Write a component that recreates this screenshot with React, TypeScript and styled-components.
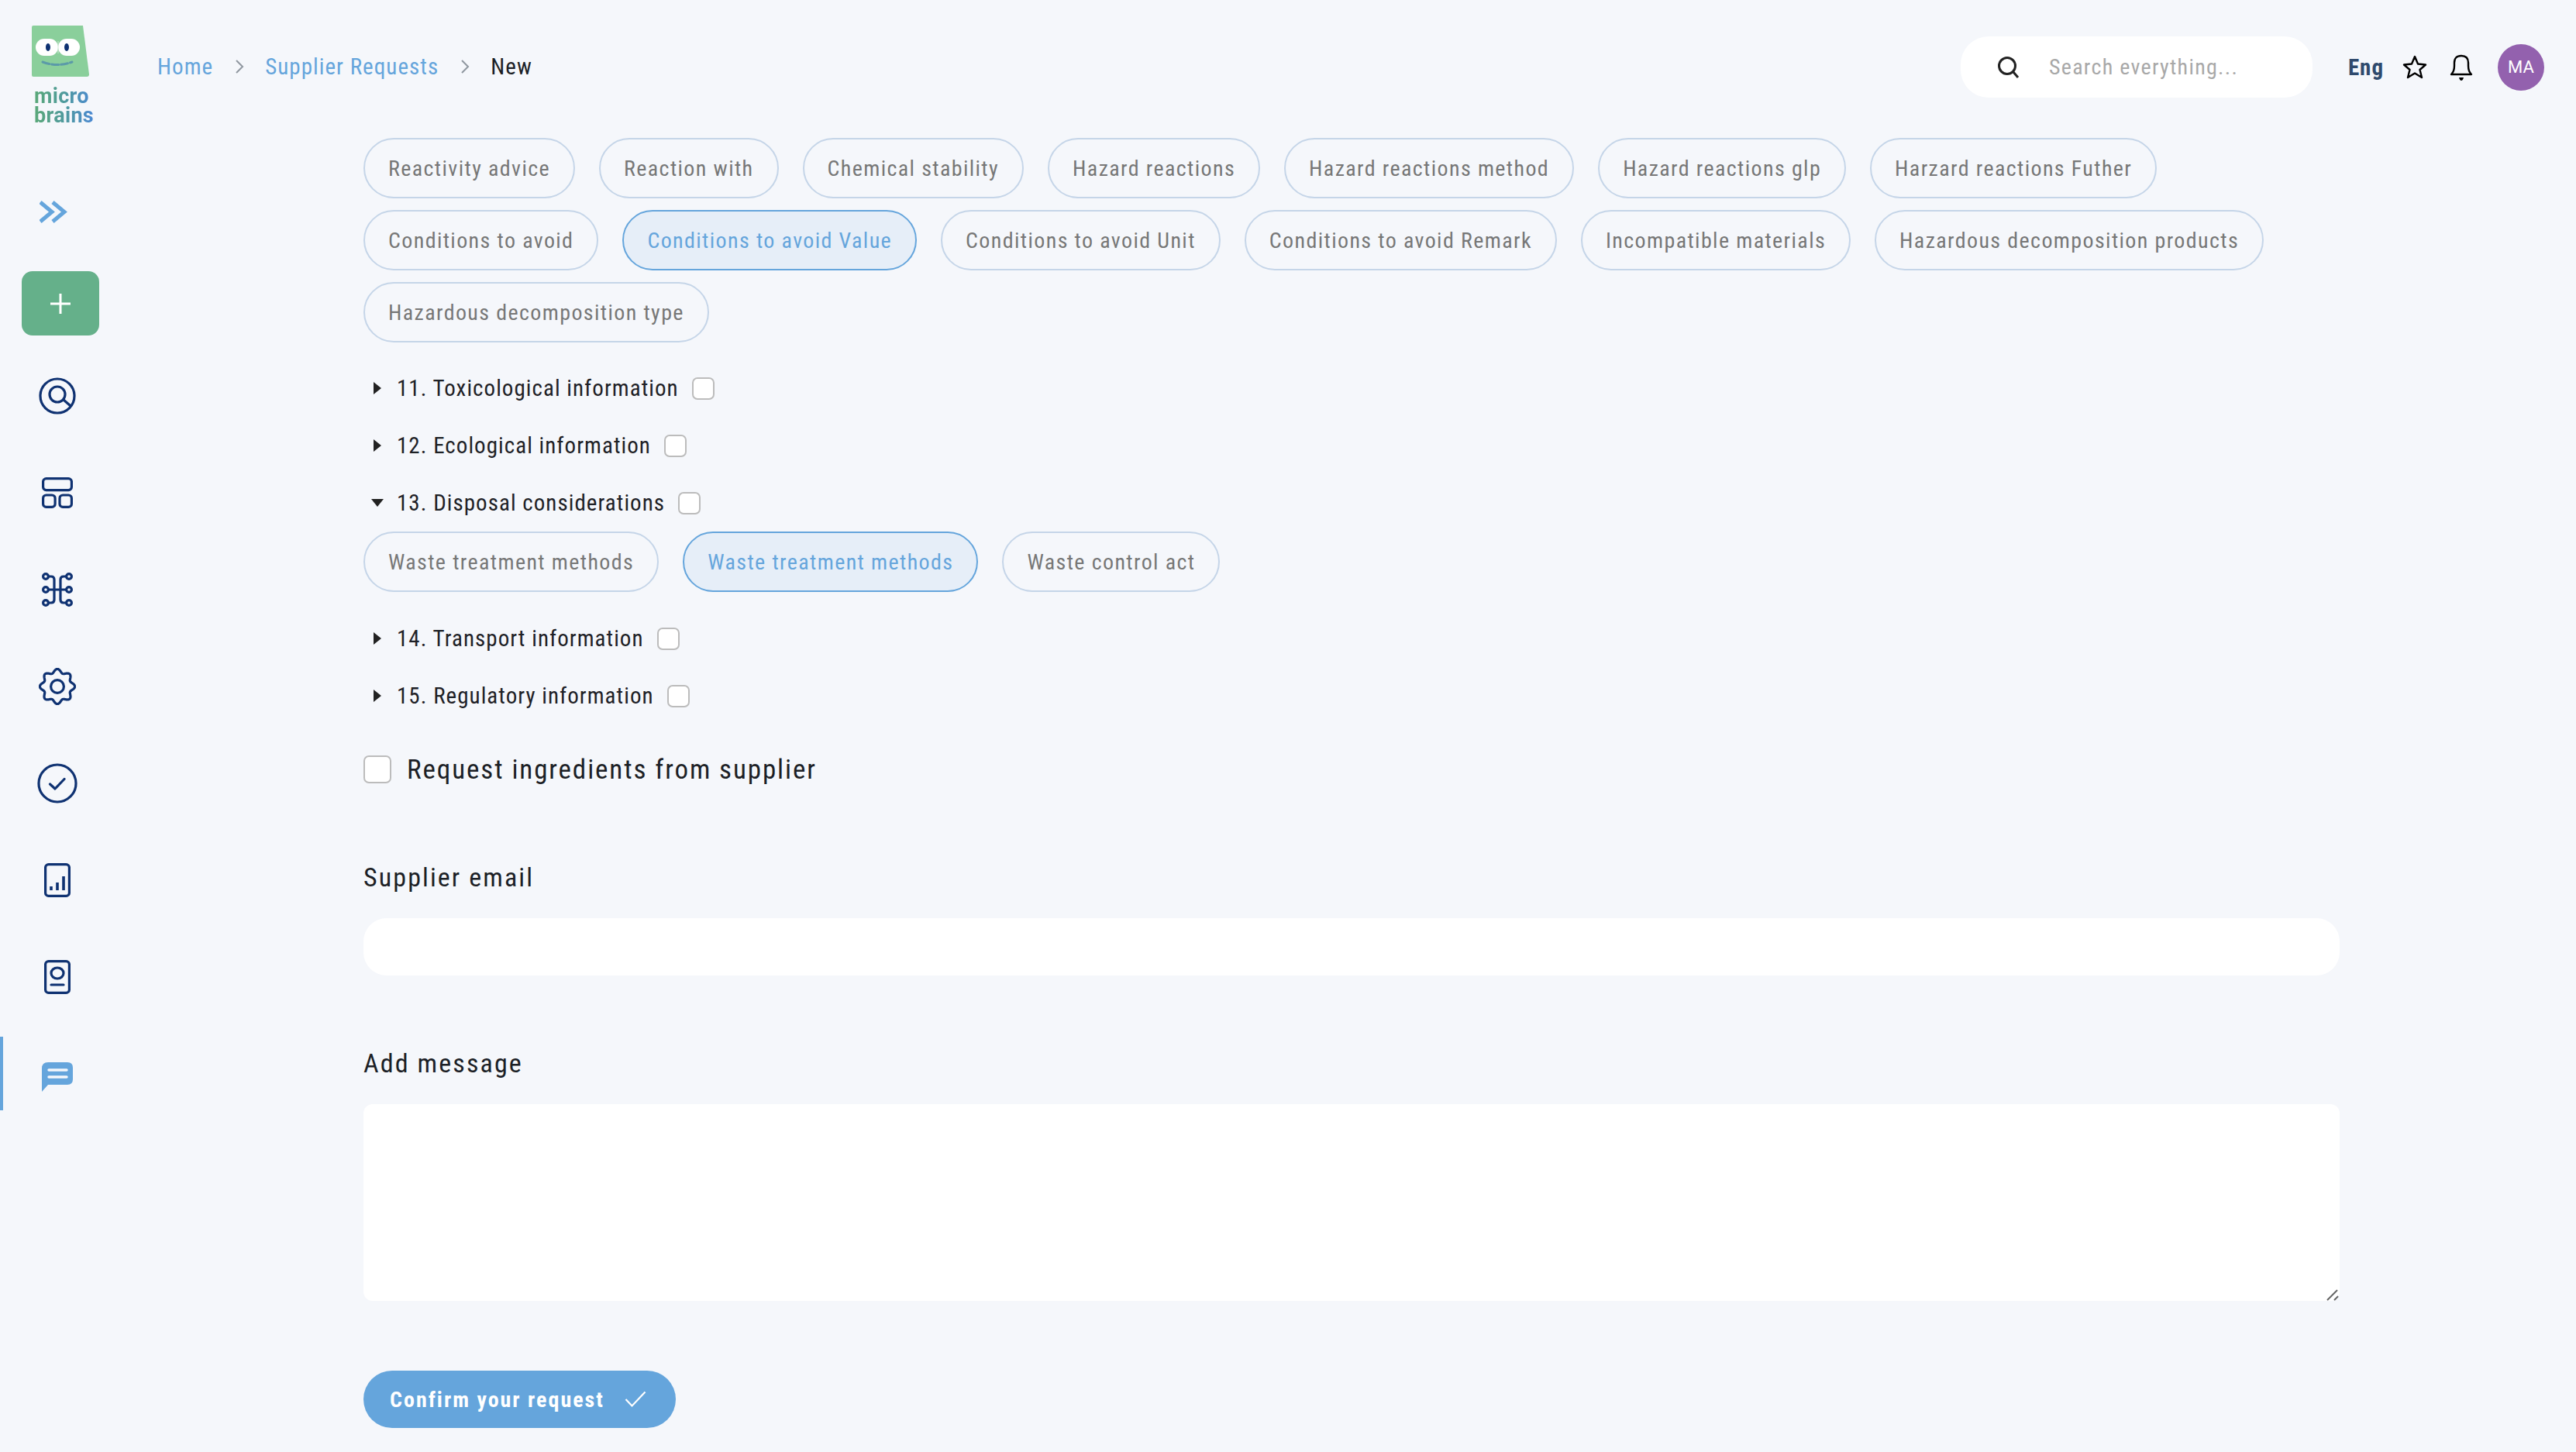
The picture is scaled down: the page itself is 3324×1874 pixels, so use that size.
import React from "react";
import styled, { createGlobalStyle } from "styled-components";

const FONT = `"Roboto Condensed", "Roboto", sans-serif`;
const NAVY = "#0f3272";
const BLUE = "#65a5dc";

const Global = createGlobalStyle`
  html, body { margin: 0; padding: 0; background: #f5f7fb; }
  body { font-family: ${FONT}; overflow: hidden; }
  * { box-sizing: border-box; }
`;

const Page = styled.div`
  display: flex;
  width: 3324px;
  height: 1874px;
  overflow: hidden;
  background: #f5f7fb;
`;

const Sidebar = styled.aside`
  flex: 0 0 148px;
  display: flex;
  flex-direction: column;
  padding-top: 33px;
`;

const LogoBlock = styled.div`
  display: flex;
  flex-direction: column;
  margin-left: 41px;
`;

const LogoText = styled.div`
  margin: 13px 0 0 3px;
  width: 80px;
  font-family: "Roboto", sans-serif;
  font-size: 27px;
  line-height: 25px;
  font-weight: 700;
  letter-spacing: 0.3px;
  background: linear-gradient(90deg, #5aa878 0%, #4f9a9e 50%, #4a86d8 100%);
  -webkit-background-clip: text;
  background-clip: text;
  color: transparent;
`;

const Collapse = styled.div`
  display: flex;
  margin: 96px 0 0 51px;
`;

const AddButton = styled.div`
  width: 100px;
  height: 83px;
  margin: 61px 0 15px 28px;
  border-radius: 14px;
  background: #65b08a;
  display: flex;
  align-items: center;
  justify-content: center;
`;

const NavItem = styled.div<{ $active?: boolean }>`
  position: relative;
  height: 125px;
  display: flex;
  align-items: center;
  justify-content: center;
  ${(p) =>
    p.$active &&
    `
    padding-top: 8px;
    &::before {
      content: "";
      position: absolute;
      left: 0;
      top: 15px;
      width: 4px;
      height: 95px;
      background: ${BLUE};
    }
  `}
`;

const Main = styled.main`
  flex: 1;
  min-width: 0;
  display: flex;
  flex-direction: column;
`;

const Header = styled.header`
  display: flex;
  align-items: center;
  justify-content: space-between;
  padding: 47px 41px 0 55px;
`;

const Breadcrumbs = styled.nav`
  display: flex;
  align-items: center;
  padding-bottom: 2px;
  font-size: 29px;
  letter-spacing: 1.05px;
`;

const Crumb = styled.span<{ $current?: boolean }>`
  color: ${(p) => (p.$current ? "#1c1f26" : BLUE)};
`;

const CrumbSep = styled.span`
  display: flex;
  width: 67px;
  justify-content: center;
`;

const HeaderRight = styled.div`
  display: flex;
  align-items: center;
`;

const SearchBox = styled.label`
  width: 454px;
  height: 79px;
  border-radius: 36px;
  background: #fff;
  display: flex;
  align-items: center;
  padding-left: 47px;
  gap: 37px;
`;

const SearchInput = styled.input`
  border: 0;
  outline: 0;
  padding: 0;
  background: transparent;
  width: 300px;
  font-family: ${FONT};
  font-size: 28px;
  letter-spacing: 1.3px;
  color: #333;
  &::placeholder {
    color: #a8a8a8;
    opacity: 1;
  }
`;

const Lang = styled.span`
  margin-left: 46px;
  font-size: 29px;
  font-weight: 700;
  letter-spacing: 1px;
  color: #2f4a6d;
`;

const HeaderIcon = styled.span<{ $ml: number }>`
  display: flex;
  margin-left: ${(p) => p.$ml}px;
`;

const Avatar = styled.div`
  width: 60px;
  height: 60px;
  margin-left: 32px;
  border-radius: 50%;
  background: #9361ae;
  color: #fff;
  font-family: "Roboto", sans-serif;
  font-size: 22px;
  display: flex;
  align-items: center;
  justify-content: center;
`;

const Content = styled.div`
  margin: 52px 305px 0 321px;
  display: flex;
  flex-direction: column;
`;

const ChipRow = styled.div`
  display: flex;
  flex-wrap: wrap;
  gap: 15px 31px;
`;

const Chip = styled.div<{ $active?: boolean }>`
  height: 78px;
  padding: 0 30px;
  border-radius: 39px;
  border: 2px solid ${(p) => (p.$active ? BLUE : "#c5d5e8")};
  background: ${(p) => (p.$active ? "#e6eef8" : "transparent")};
  color: ${(p) => (p.$active ? BLUE : "#777")};
  font-size: 28px;
  letter-spacing: 1.38px;
  display: flex;
  align-items: center;
  white-space: nowrap;
`;

const Sections = styled.div`
  margin-top: 37px;
  display: flex;
  flex-direction: column;
  gap: 30px;
`;

const SectionRow = styled.div`
  height: 44px;
  display: flex;
  align-items: center;
  color: #1e2126;
  font-size: 29px;
  letter-spacing: 1.05px;
`;

const CaretSlot = styled.span`
  flex: 0 0 43px;
  display: flex;
  justify-content: flex-end;
  padding-right: 20px;
`;

const CaretRight = styled.span`
  width: 0;
  height: 0;
  border-left: 10px solid #222;
  border-top: 8px solid transparent;
  border-bottom: 8px solid transparent;
`;

const CaretDown = styled.span`
  width: 0;
  height: 0;
  margin-right: -3px;
  border-top: 10px solid #222;
  border-left: 8px solid transparent;
  border-right: 8px solid transparent;
`;

const Check = styled.input.attrs({ type: "checkbox" })<{ $size: number }>`
  appearance: none;
  margin: 0;
  width: ${(p) => p.$size}px;
  height: ${(p) => p.$size}px;
  border: 2px solid #bcbcbc;
  border-radius: 7px;
  background: #fff;
  flex: none;
`;

const SectionCheck = styled(Check)`
  margin-left: 17px;
`;

const SubChips = styled(ChipRow)`
  margin: -15px 0 8px;
`;

const RequestRow = styled.label`
  margin-top: 51px;
  height: 44px;
  display: flex;
  align-items: center;
  gap: 20px;
  color: #1c1f26;
  font-size: 35px;
  letter-spacing: 1.9px;
`;

const FieldLabel = styled.div<{ $mt: number }>`
  margin-top: ${(p) => p.$mt}px;
  height: 40px;
  display: flex;
  align-items: center;
  color: #1c1f26;
  font-size: 34px;
  letter-spacing: 2.1px;
`;

const TextInput = styled.input`
  margin-top: 33px;
  width: 100%;
  height: 74px;
  border: 0;
  outline: 0;
  border-radius: 30px;
  background: #fff;
`;

const MessageWrap = styled.div`
  position: relative;
  margin-top: 33px;
`;

const MessageBox = styled.textarea`
  display: block;
  width: 100%;
  height: 254px;
  border: 0;
  outline: 0;
  border-radius: 12px;
  background: #fff;
  resize: none;
`;

const Grip = styled.svg`
  position: absolute;
  right: 1px;
  bottom: 0;
  pointer-events: none;
`;

const Confirm = styled.button`
  margin-top: 90px;
  align-self: flex-start;
  width: 403px;
  height: 74px;
  border: 0;
  border-radius: 37px;
  background: ${BLUE};
  color: #fff;
  font-family: ${FONT};
  font-weight: 700;
  font-size: 28px;
  letter-spacing: 2px;
  display: flex;
  align-items: center;
  padding: 0 0 0 34px;
  gap: 26px;
`;

const gearPath = (() => {
  const pts: string[] = [];
  const n = 160;
  for (let i = 0; i < n; i++) {
    const t = (i / n) * Math.PI * 2;
    const r = 20.2 + 2.4 * Math.cos(8 * t);
    pts.push(`${(24 + r * Math.cos(t)).toFixed(2)} ${(24 + r * Math.sin(t)).toFixed(2)}`);
  }
  return `M${pts.join("L")}Z`;
})();

const iconProps = { fill: "none", stroke: NAVY, strokeWidth: 3.2, strokeLinecap: "round" as const, strokeLinejoin: "round" as const };

const Logo = () => (
  <svg width="76" height="66" viewBox="0 0 76 66">
    <path d="M2 0H66L74 63Q74 66 71 66H2Q0 66 0 64V2Q0 0 2 0Z" fill="#8acf9b" />
    <rect x="5" y="17" width="29" height="22" rx="11" fill="#fff" />
    <rect x="34" y="17" width="28" height="22" rx="11" fill="#fff" />
    <path d="M34 20V36" stroke="#cfe8d6" strokeWidth="1" />
    <ellipse cx="21" cy="28" rx="3" ry="5" fill={NAVY} />
    <ellipse cx="45" cy="28" rx="3" ry="5" fill={NAVY} />
    <path d="M14 47Q33 54 52 47" fill="none" stroke="#5b9aa8" strokeWidth="3" strokeDasharray="9 3" strokeLinecap="round" />
  </svg>
);

const Chevrons = () => (
  <svg width="36" height="31" viewBox="0 0 36 31">
    <path d="M1 3L16 15.5L1 28" fill="none" stroke={BLUE} strokeWidth="5" />
    <path d="M17 3L32 15.5L17 28" fill="none" stroke={BLUE} strokeWidth="5" />
  </svg>
);

const Plus = () => (
  <svg width="28" height="28" viewBox="0 0 28 28">
    <path d="M14 1V27M1 14H27" stroke="#fff" strokeWidth="3" />
  </svg>
);

const SearchRound = () => (
  <svg width="48" height="48" viewBox="0 0 48 48" {...iconProps}>
    <circle cx="24" cy="24" r="22" />
    <circle cx="24" cy="22" r="10" />
    <path d="M32 29L40 36" />
  </svg>
);

const Layout = () => (
  <svg width="40" height="40" viewBox="0 0 40 40" {...iconProps}>
    <rect x="1.6" y="1.6" width="36.8" height="15" rx="4" />
    <rect x="1.6" y="23" width="15.5" height="15.4" rx="4" />
    <rect x="23" y="23" width="15.4" height="15.4" rx="4" />
  </svg>
);

const Cmd = () => (
  <svg width="40" height="44" viewBox="0 0 40 44" {...iconProps}>
    <circle cx="5" cy="5" r="3.4" />
    <circle cx="5" cy="22" r="3.4" />
    <circle cx="5" cy="39" r="3.4" />
    <circle cx="35" cy="5" r="3.4" />
    <circle cx="35" cy="22" r="3.4" />
    <circle cx="35" cy="39" r="3.4" />
    <path d="M8.5 5H12Q16 5 16 9V35Q16 39 12 39H8.5M8.5 22H31.5M31.5 5H28Q24 5 24 9V35Q24 39 28 39H31.5" />
  </svg>
);

const Gear = () => (
  <svg width="48" height="48" viewBox="0 0 48 48" {...iconProps}>
    <path d={gearPath} />
    <circle cx="24" cy="24" r="8.4" />
  </svg>
);

const CheckCircle = () => (
  <svg width="52" height="52" viewBox="0 0 52 52" {...iconProps}>
    <circle cx="26" cy="26" r="24" />
    <path d="M16.5 27L23 33L35 20.5" />
  </svg>
);

const Chart = () => (
  <svg width="34" height="44" viewBox="0 0 34 44" {...iconProps}>
    <rect x="1.6" y="1.6" width="30.8" height="40.8" rx="4" />
    <path d="M9 35V30M17 35V25M25 35V17" strokeWidth="3.6" strokeLinecap="butt" />
  </svg>
);

const Person = () => (
  <svg width="34" height="44" viewBox="0 0 34 44" {...iconProps}>
    <rect x="1.6" y="1.6" width="30.8" height="40.8" rx="4" />
    <ellipse cx="17" cy="17" rx="8" ry="7" />
    <path d="M9 32H25" />
  </svg>
);

const Chat = () => (
  <svg width="40" height="38" viewBox="0 0 40 38">
    <path d="M8 0H33Q40 0 40 7V22Q40 29 33 29H8L0 38V8Q0 0 8 0Z" fill={BLUE} />
    <path d="M9 10H32M9 19H32" stroke="#f5f7fb" strokeWidth="3.4" strokeLinecap="round" />
  </svg>
);

const CrumbChevron = () => (
  <svg width="12" height="20" viewBox="0 0 12 20">
    <path d="M2 2L10 10L2 18" fill="none" stroke="#8f979f" strokeWidth="2" />
  </svg>
);

const SearchGlass = () => (
  <svg width="30" height="28" viewBox="0 0 30 28">
    <circle cx="13" cy="12" r="10.5" fill="none" stroke="#222" strokeWidth="3" />
    <path d="M21 20L27 27" stroke="#222" strokeWidth="3" />
  </svg>
);

const Star = () => (
  <svg width="32" height="31" viewBox="0 0 32 31">
    <path d="M16 2L20 11.5L30 12.5L22.5 19L25 29L16 23.5L7 29L9.5 19L2 12.5L12 11.5Z" fill="none" stroke="#000" strokeWidth="2.4" strokeLinejoin="round" />
  </svg>
);

const Bell = () => (
  <svg width="30" height="34" viewBox="0 0 30 34">
    <path d="M2 26Q6 22 6 15V11Q6 2 15 2Q24 2 24 11V15Q24 22 28 26Z" fill="none" stroke="#000" strokeWidth="2.4" strokeLinejoin="round" />
    <path d="M12 30H18Q17 34 15 34Q13 34 12 30Z" fill="#000" />
  </svg>
);

const Tick = () => (
  <svg width="28" height="22" viewBox="0 0 28 22">
    <path d="M1.5 11L9.5 19.5L26.5 1.5" fill="none" stroke="#fff" strokeWidth="2.2" />
  </svg>
);

const chips: [string, boolean?][] = [
  ["Reactivity advice"],
  ["Reaction with"],
  ["Chemical stability"],
  ["Hazard reactions"],
  ["Hazard reactions method"],
  ["Hazard reactions glp"],
  ["Harzard reactions Futher"],
  ["Conditions to avoid"],
  ["Conditions to avoid Value", true],
  ["Conditions to avoid Unit"],
  ["Conditions to avoid Remark"],
  ["Incompatible materials"],
  ["Hazardous decomposition products"],
  ["Hazardous decomposition type"],
];

const navIcons = [SearchRound, Layout, Cmd, Gear, CheckCircle, Chart, Person];

const Section = ({ title, open }: { title: string; open?: boolean }) => (
  <SectionRow>
    <CaretSlot>{open ? <CaretDown /> : <CaretRight />}</CaretSlot>
    {title}
    <SectionCheck $size={29} />
  </SectionRow>
);

export default function App() {
  return (
    <Page>
      <Global />
      <Sidebar>
        <LogoBlock>
          <Logo />
          <LogoText>micro brains</LogoText>
        </LogoBlock>
        <Collapse>
          <Chevrons />
        </Collapse>
        <AddButton>
          <Plus />
        </AddButton>
        {navIcons.map((Icon, i) => (
          <NavItem key={i}>
            <Icon />
          </NavItem>
        ))}
        <NavItem $active>
          <Chat />
        </NavItem>
      </Sidebar>
      <Main>
        <Header>
          <Breadcrumbs>
            <Crumb>Home</Crumb>
            <CrumbSep>
              <CrumbChevron />
            </CrumbSep>
            <Crumb>Supplier Requests</Crumb>
            <CrumbSep>
              <CrumbChevron />
            </CrumbSep>
            <Crumb $current>New</Crumb>
          </Breadcrumbs>
          <HeaderRight>
            <SearchBox>
              <SearchGlass />
              <SearchInput placeholder="Search everything..." />
            </SearchBox>
            <Lang>Eng</Lang>
            <HeaderIcon $ml={24}>
              <Star />
            </HeaderIcon>
            <HeaderIcon $ml={29}>
              <Bell />
            </HeaderIcon>
            <Avatar>MA</Avatar>
          </HeaderRight>
        </Header>
        <Content>
          <ChipRow>
            {chips.map(([label, active]) => (
              <Chip key={label} $active={active}>
                {label}
              </Chip>
            ))}
          </ChipRow>
          <Sections>
            <Section title="11. Toxicological information" />
            <Section title="12. Ecological information" />
            <Section title="13. Disposal considerations" open />
            <SubChips>
              <Chip>Waste treatment methods</Chip>
              <Chip $active>Waste treatment methods</Chip>
              <Chip>Waste control act</Chip>
            </SubChips>
            <Section title="14. Transport information" />
            <Section title="15. Regulatory information" />
          </Sections>
          <RequestRow>
            <Check $size={36} />
            Request ingredients from supplier
          </RequestRow>
          <FieldLabel $mt={97}>Supplier email</FieldLabel>
          <TextInput />
          <FieldLabel $mt={93}>Add message</FieldLabel>
          <MessageWrap>
            <MessageBox />
            <Grip width="16" height="16" viewBox="0 0 16 16">
              <path d="M1 15L14 2M10 15L15 10" stroke="#666" strokeWidth="2" fill="none" />
            </Grip>
          </MessageWrap>
          <Confirm>
            Confirm your request
            <Tick />
          </Confirm>
        </Content>
      </Main>
    </Page>
  );
}
